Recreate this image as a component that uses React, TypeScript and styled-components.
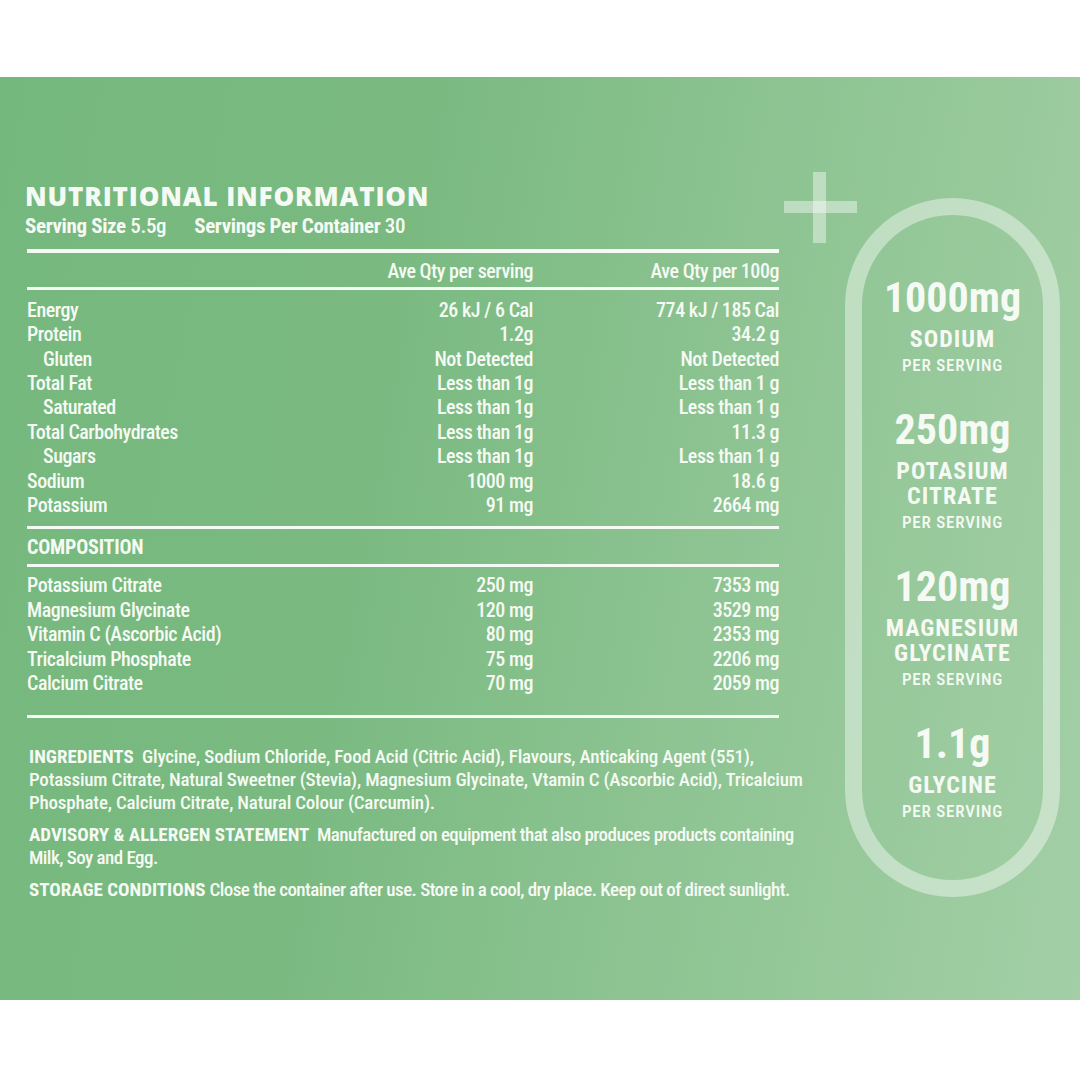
import React from "react";
import styled, { createGlobalStyle } from "styled-components";

const NARROW = `"Roboto Condensed", "Roboto", "DejaVu Sans Condensed", sans-serif`;
const WIDE = `"Open Sans", "Liberation Sans", sans-serif`;
const INK = "#f6faf4";

const GlobalStyle = createGlobalStyle`
  html, body { margin: 0; padding: 0; background: #ffffff; }
  * { box-sizing: border-box; }
`;

const Page = styled.div`
  width: 1080px;
  height: 1080px;
  padding-top: 77px;
  background: #ffffff;
  overflow: hidden;
`;

const Panel = styled.section`
  position: relative;
  height: 923px;
  display: flex;
  background: linear-gradient(100deg, #75b87d 0%, #7aba81 35%, #8cc391 62%, #a3cfa6 100%);
  color: ${INK};
  font-stretch: 75%;
`;

const LeftCol = styled.div`
  flex: 0 0 845px;
  min-width: 0;
  padding: 104px 0 0 25px;
`;

const Title = styled.h1`
  margin: 0;
  font-family: ${WIDE};
  font-stretch: 100%;
  font-weight: 800;
  font-size: 26px;
  line-height: 30px;
  letter-spacing: 0.85px;
`;

const ServingLine = styled.div`
  margin-top: 2.5px;
  display: flex;
  gap: 28px;
  font-family: ${NARROW};
  font-weight: 500;
  font-size: 21px;
  line-height: 24px;
  letter-spacing: -0.35px;
`;

const Bold = styled.b`
  font-weight: 700;
`;

const Table = styled.div`
  width: 752px;
  margin-left: 2px;
  font-family: ${NARROW};
  font-weight: 500;
  font-size: 20px;
  letter-spacing: -0.45px;
`;

const Rule = styled.div<{ $thick?: number; $mt?: number }>`
  height: ${(p) => p.$thick ?? 3}px;
  margin-top: ${(p) => p.$mt ?? 0}px;
  background: ${INK};
`;

const Rows = styled.div<{ $pt: number }>`
  padding-top: ${(p) => p.$pt}px;
`;

const Row = styled.div`
  display: grid;
  grid-template-columns: 1fr 200px 246px;
  line-height: 24.4px;
  height: 24.4px;
  white-space: nowrap;
`;

const Label = styled.span<{ $indent?: boolean }>`
  padding-left: ${(p) => (p.$indent ? 16 : 0)}px;
`;

const Num = styled.span`
  text-align: right;
`;

const SectionHead = styled.div`
  font-weight: 700;
  line-height: 24px;
  margin-top: 6px;
  letter-spacing: -0.2px;
`;

const Notes = styled.div`
  margin-top: 27px;
  margin-left: 4px;
  font-family: ${NARROW};
  font-weight: 500;
  font-size: 19px;
  line-height: 23px;
`;

const Note = styled.p<{ $tight?: number }>`
  margin: 0 0 9px 0;
  white-space: nowrap;
  letter-spacing: ${(p) => p.$tight ?? -0.15}px;
  & > b {
    letter-spacing: 0px;
  }
`;

const RightCol = styled.div`
  padding-top: 121px;
`;

const Pill = styled.div`
  width: 215px;
  height: 699px;
  border: 17px solid rgba(255, 255, 255, 0.42);
  border-radius: 108px;
  padding-top: 60px;
  display: flex;
  flex-direction: column;
  align-items: center;
  gap: 32px;
  font-family: ${NARROW};
  text-align: center;
`;

const Stat = styled.div`
  display: flex;
  flex-direction: column;
  align-items: center;
`;

const StatValue = styled.div`
  font-weight: 700;
  font-size: 42px;
  line-height: 46px;
  letter-spacing: 0px;
`;

const StatName = styled.div`
  margin-top: 6px;
  font-weight: 700;
  font-size: 24px;
  line-height: 25px;
  letter-spacing: 1px;
`;

const StatPer = styled.div`
  margin-top: 3px;
  font-weight: 500;
  font-size: 17px;
  line-height: 20px;
  letter-spacing: 0.8px;
`;

const Plus = styled.div`
  position: absolute;
  left: 784px;
  top: 95px;
  width: 73px;
  height: 71px;
  &::before,
  &::after {
    content: "";
    position: absolute;
    background: rgba(255, 255, 255, 0.42);
  }
  &::before {
    left: 0;
    top: 29px;
    width: 73px;
    height: 12px;
  }
  &::after {
    left: 29px;
    top: 0;
    width: 13px;
    height: 71px;
  }
`;

type NRow = { label: string; a: string; b: string; indent?: boolean };

const nutrition: NRow[] = [
  { label: "Energy", a: "26 kJ / 6 Cal", b: "774 kJ / 185 Cal" },
  { label: "Protein", a: "1.2g", b: "34.2 g" },
  { label: "Gluten", a: "Not Detected", b: "Not Detected", indent: true },
  { label: "Total Fat", a: "Less than 1g", b: "Less than 1 g" },
  { label: "Saturated", a: "Less than 1g", b: "Less than 1 g", indent: true },
  { label: "Total Carbohydrates", a: "Less than 1g", b: "11.3 g" },
  { label: "Sugars", a: "Less than 1g", b: "Less than 1 g", indent: true },
  { label: "Sodium", a: "1000 mg", b: "18.6 g" },
  { label: "Potassium", a: "91 mg", b: "2664 mg" },
];

const composition: NRow[] = [
  { label: "Potassium Citrate", a: "250 mg", b: "7353 mg" },
  { label: "Magnesium Glycinate", a: "120 mg", b: "3529 mg" },
  { label: "Vitamin C (Ascorbic Acid)", a: "80 mg", b: "2353 mg" },
  { label: "Tricalcium Phosphate", a: "75 mg", b: "2206 mg" },
  { label: "Calcium Citrate", a: "70 mg", b: "2059 mg" },
];

const stats = [
  { value: "1000mg", names: ["SODIUM"] },
  { value: "250mg", names: ["POTASIUM", "CITRATE"] },
  { value: "120mg", names: ["MAGNESIUM", "GLYCINATE"] },
  { value: "1.1g", names: ["GLYCINE"] },
];

export default function App() {
  return (
    <Page>
      <GlobalStyle />
      <Panel>
        <LeftCol>
          <Title>NUTRITIONAL INFORMATION</Title>
          <ServingLine>
            <span>
              <Bold>Serving Size</Bold> 5.5g
            </span>
            <span>
              <Bold>Servings Per Container</Bold> 30
            </span>
          </ServingLine>
          <Table>
            <Rule $thick={4} $mt={11} />
            <Rows $pt={6}>
              <Row>
                <span />
                <Num>Ave Qty per serving</Num>
                <Num>Ave Qty per 100g</Num>
              </Row>
            </Rows>
            <Rule $mt={4} />
            <Rows $pt={8}>
              {nutrition.map((r) => (
                <Row key={r.label}>
                  <Label $indent={r.indent}>{r.label}</Label>
                  <Num>{r.a}</Num>
                  <Num>{r.b}</Num>
                </Row>
              ))}
            </Rows>
            <Rule $mt={9} />
            <SectionHead>COMPOSITION</SectionHead>
            <Rule $mt={5} />
            <Rows $pt={6}>
              {composition.map((r) => (
                <Row key={r.label}>
                  <Label>{r.label}</Label>
                  <Num>{r.a}</Num>
                  <Num>{r.b}</Num>
                </Row>
              ))}
            </Rows>
            <Rule $mt={20} />
          </Table>
          <Notes>
            <Note $tight={-0.2}>
              <Bold>INGREDIENTS</Bold>&nbsp;&nbsp;Glycine, Sodium Chloride, Food Acid (Citric Acid), Flavours, Anticaking Agent (551),
              <br />
              Potassium Citrate, Natural Sweetner (Stevia), Magnesium Glycinate, Vtamin C (Ascorbic Acid), Tricalcium
              <br />
              Phosphate, Calcium Citrate, Natural Colour (Carcumin).
            </Note>
            <Note $tight={-0.55}>
              <Bold>ADVISORY &amp; ALLERGEN STATEMENT</Bold>&nbsp; Manufactured on equipment that also produces products containing
              <br />
              Milk, Soy and Egg.
            </Note>
            <Note $tight={-0.55}>
              <Bold>STORAGE CONDITIONS</Bold> Close the container after use. Store in a cool, dry place. Keep out of direct sunlight.
            </Note>
          </Notes>
        </LeftCol>
        <RightCol>
          <Pill>
            {stats.map((s) => (
              <Stat key={s.value}>
                <StatValue>{s.value}</StatValue>
                <StatName>
                  {s.names.map((n) => (
                    <div key={n}>{n}</div>
                  ))}
                </StatName>
                <StatPer>PER SERVING</StatPer>
              </Stat>
            ))}
          </Pill>
        </RightCol>
        <Plus />
      </Panel>
    </Page>
  );
}
